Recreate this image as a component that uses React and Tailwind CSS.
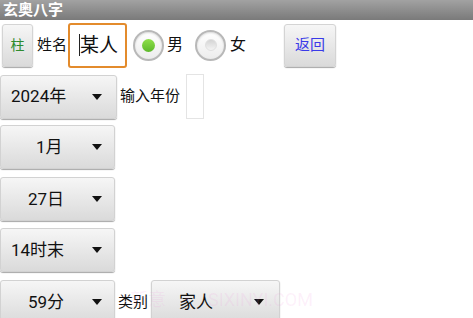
import React from "react";

const FONT = { fontFamily: 'Roboto, "Noto Sans CJK SC", "Noto Sans", sans-serif' };

function Arrow() {
  return <div className="w-0 h-0 border-x-[5px] border-x-transparent border-t-[6px] border-t-[#111]" />;
}

function Spinner({ text, w = "w-[117px]", pl }) {
  return (
    <div className={`${w} h-[44px] flex items-center rounded-[3px] border border-[#d2d2d2] bg-gradient-to-b from-[#f6f6f6] to-[#dadada] shadow-[0_1px_1px_rgba(0,0,0,0.35)]`}>
      <span className={`w-[91px] ${pl} text-[17px] text-[#111] leading-none whitespace-nowrap`}>{text}</span>
      <Arrow />
    </div>
  );
}

function Radio({ checked }) {
  return (
    <div className="w-[31px] h-[31px] rounded-full border-2 border-[#b8b8b8] bg-gradient-to-b from-[#ffffff] to-[#ececec] flex items-center justify-center shadow-[inset_0_1px_2px_rgba(0,0,0,0.15)]">
      {checked ? (
        <div className="w-[13px] h-[13px] rounded-full bg-gradient-to-b from-[#8fe04a] to-[#5cb82a]" />
      ) : (
        <div className="w-[12px] h-[12px] rounded-full bg-gradient-to-b from-[#d4d4d4] to-[#f4f4f4] border border-[#e0e0e0]" />
      )}
    </div>
  );
}

export default function App() {
  return (
    <div className="relative w-[473px] h-[318px] overflow-hidden bg-white" style={FONT}>
      <div className="h-[20px] bg-gradient-to-b from-[#a2a2a2] to-[#7a7a7a] pl-[3px] text-white text-[15px] font-bold leading-[20px]">
        玄奥八字
      </div>

      <div className="flex items-center h-[46px] mt-[2px]">
        <div className="ml-[2px] w-[31px] h-[43px] rounded-[3px] border border-[#d4d4d4] bg-gradient-to-b from-[#f6f6f6] to-[#dadada] shadow-[0_1px_1px_rgba(0,0,0,0.35)] flex items-center justify-center text-[14px] text-[#2e8b2e]">
          柱
        </div>
        <span className="ml-[4px] text-[15px] text-[#111]">姓名</span>
        <div className="ml-[1px] w-[59px] h-[45px] border-2 border-[#e38b2c] rounded-[3px] flex items-center pl-[9px]">
          <div className="w-[1px] h-[22px] bg-[#222]" />
          <span className="text-[19px] text-[#111] leading-none">某人</span>
        </div>
        <div className="ml-[6px]"><Radio checked /></div>
        <span className="ml-[3px] text-[16px] text-[#111]">男</span>
        <div className="ml-[12px]"><Radio /></div>
        <span className="ml-[4px] text-[16px] text-[#111]">女</span>
        <div className="ml-[38px] w-[52px] h-[43px] rounded-[3px] border border-[#d4d4d4] bg-gradient-to-b from-[#f6f6f6] to-[#dadada] shadow-[0_1px_1px_rgba(0,0,0,0.35)] flex items-center justify-center text-[15px] text-[#3a3ae8]">
          返回
        </div>
      </div>

      <div className="flex items-center mt-[6px]">
        <Spinner text="2024年" pl="pl-[10px]" />
        <span className="ml-[3px] text-[15px] text-[#111]">输入年份</span>
        <div className="ml-[6px] w-[18px] h-[45px] border border-[#e4e4e4] bg-white" />
      </div>

      <div className="mt-[6px]">
        <Spinner text="1月" w="w-[115px]" pl="pl-[35px]" />
      </div>
      <div className="mt-[8px]">
        <Spinner text="27日" w="w-[115px]" pl="pl-[27px]" />
      </div>
      <div className="mt-[7px]">
        <Spinner text="14时末" w="w-[115px]" pl="pl-[10px]" />
      </div>
      <div className="flex items-center mt-[8px]">
        <Spinner text="59分" w="w-[115px]" pl="pl-[27px]" />
        <span className="ml-[3px] text-[15px] text-[#111]">类别</span>
        <div className="ml-[3px] w-[129px] h-[44px] flex items-center rounded-[3px] border border-[#d2d2d2] bg-gradient-to-b from-[#f6f6f6] to-[#dadada] shadow-[0_1px_1px_rgba(0,0,0,0.35)]">
          <span className="w-[102px] pl-[27px] text-[17px] text-[#111] leading-none">家人</span>
          <Arrow />
        </div>
      </div>

      <div className="absolute left-[130px] top-[286px] pointer-events-none text-[18px] text-[rgba(240,140,220,0.13)] whitespace-nowrap">
        新意　•　SIXINYI.COM
      </div>
    </div>
  );
}
